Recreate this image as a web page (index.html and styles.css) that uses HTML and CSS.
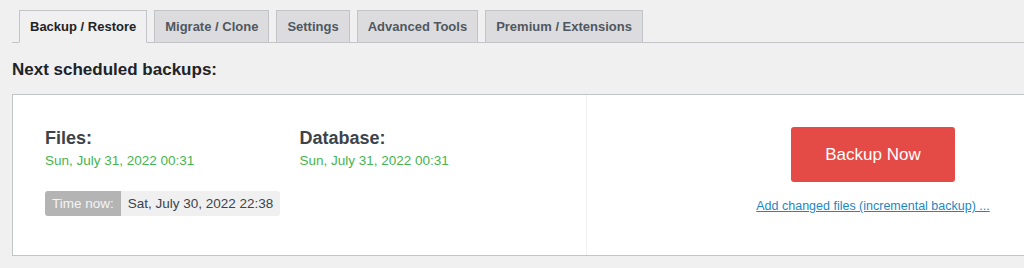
FILE: index.html
```html
<!DOCTYPE html>
<html lang="en">
<head>
    <meta charset="UTF-8">
    <meta name="viewport" content="width=device-width, initial-scale=1.0">
    <title>Backup / Restore</title>
    <link rel="stylesheet" href="styles.css">
</head>
<body>
    <div class="wrap">
        <nav class="tabs">
            <a class="tab active" href="#">Backup / Restore</a>
            <a class="tab" href="#">Migrate / Clone</a>
            <a class="tab" href="#">Settings</a>
            <a class="tab" href="#">Advanced Tools</a>
            <a class="tab" href="#">Premium / Extensions</a>
        </nav>

        <h2 class="section-title">Next scheduled backups:</h2>

        <div class="panel">
            <div class="schedule">
                <div class="schedule-row">
                    <div class="schedule-item">
                        <h3>Files:</h3>
                        <div class="when">Sun, July 31, 2022 00:31</div>
                    </div>
                    <div class="schedule-item">
                        <h3>Database:</h3>
                        <div class="when">Sun, July 31, 2022 00:31</div>
                    </div>
                </div>
                <div class="time-now">
                    <span class="time-label">Time now:</span>
                    <span class="time-value">Sat, July 30, 2022 22:38</span>
                </div>
            </div>
            <div class="actions">
                <button class="backup-now">Backup Now</button>
                <a class="incremental" href="#">Add changed files (incremental backup) ...</a>
            </div>
        </div>
    </div>
</body>
</html>
```

FILE: styles.css
```css
body {
    margin: 0;
    background-color: #f0f0f1;
    font-family: "Liberation Sans", Arial, sans-serif;
    color: #1d2327;
}
.wrap {
    padding-left: 12px;
}
.tabs {
    display: flex;
    gap: 7px;
    padding: 10px 0 0 7px;
    border-bottom: 1px solid #c3c4c7;
}
.tab {
    display: block;
    height: 31px;
    line-height: 31px;
    padding: 0 10px;
    margin-bottom: -1px;
    border: 1px solid #c3c4c7;
    background-color: #dcdcde;
    color: #50575e;
    font-size: 13px;
    font-weight: bold;
    text-decoration: none;
}
.tab.active {
    background-color: #f0f0f1;
    border-bottom-color: #f0f0f1;
    color: #1d2327;
}
.section-title {
    margin: 0;
    padding: 17px 0 14px;
    font-size: 17px;
    line-height: 20px;
    color: #1d2327;
}
/* right edge of the box is cut off by the window */
.panel {
    display: grid;
    grid-template-columns: 574px 1fr;
    background-color: #fff;
    border: 1px solid #c3c4c7;
    border-right: none;
    height: 160px;
}
.schedule {
    padding: 31px 32px 0;
    border-right: 1px solid #f0f0f1;
}
.schedule-row {
    display: flex;
}
.schedule-item {
    width: 255px;
}
.schedule-item h3 {
    margin: 0;
    font-size: 18px;
    line-height: 24px;
    color: #3c434a;
}
.when {
    font-size: 13.5px;
    line-height: 22px;
    color: #46b450;
}
.time-now {
    display: inline-flex;
    margin-top: 19px;
    border-radius: 3px;
    overflow: hidden;
    font-size: 13.5px;
    line-height: 25px;
}
.time-label {
    background-color: #b4b4b4;
    color: #f4f4f4;
    padding: 0 7px;
}
.time-value {
    background-color: #f0f0f1;
    color: #3c434a;
    padding: 0 7px;
}
.actions {
    display: flex;
    flex-direction: column;
    align-items: center;
    padding: 32px 0 0 135px;
}
.backup-now {
    width: 164px;
    height: 55px;
    background-color: #e44b47;
    color: #fff;
    border: none;
    border-radius: 3px;
    font-family: inherit;
    font-size: 17px;
    cursor: pointer;
}
.incremental {
    margin-top: 15px;
    font-size: 12.5px;
    line-height: 18px;
    color: #1e87c3;
}
```
